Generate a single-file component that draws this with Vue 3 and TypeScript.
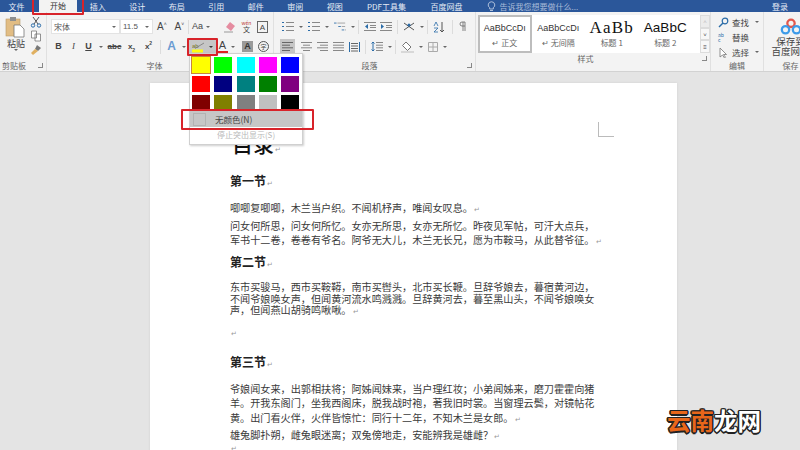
<script setup lang="ts">
const tabs = ['插入', '设计', '布局', '引用', '邮件', '审阅', '视图', 'PDF工具集', '百度网盘']

const swatches = [
  '#ffff00', '#00ff00', '#00ffff', '#ff00ff', '#0000ff',
  '#ff0000', '#000080', '#008080', '#008000', '#800080',
  '#800000', '#808000', '#808080', '#c0c0c0', '#000000',
]

const styles = [
  { name: '正文', sample: 'AaBbCcDı', cls: 'sNormal', mark: true },
  { name: '无间隔', sample: 'AaBbCcDı', cls: 'sNormal', mark: true },
  { name: '标题 1', sample: 'AaBb', cls: 'sH1', mark: false },
  { name: '标题 2', sample: 'AaBbC', cls: 'sH2', mark: false },
]

type Block = { kind: string; lines: string[] }
const doc: Block[] = [
  { kind: 'title', lines: ['目录'] },
  { kind: 'h1', lines: ['第一节'] },
  { kind: 'p1', lines: ['唧唧复唧唧，木兰当户织。不闻机杼声，唯闻女叹息。'] },
  { kind: 'p2', lines: ['问女何所思，问女何所忆。女亦无所思，女亦无所忆。昨夜见军帖，可汗大点兵，', '军书十二卷，卷卷有爷名。阿爷无大儿，木兰无长兄，愿为市鞍马，从此替爷征。'] },
  { kind: 'h2', lines: ['第二节'] },
  { kind: 'p3', lines: ['东市买骏马，西市买鞍鞯，南市买辔头，北市买长鞭。旦辞爷娘去，暮宿黄河边，', '不闻爷娘唤女声，但闻黄河流水鸣溅溅。旦辞黄河去，暮至黑山头，不闻爷娘唤女', '声，但闻燕山胡骑鸣啾啾。'] },
  { kind: 'empty', lines: [''] },
  { kind: 'h3', lines: ['第三节'] },
  { kind: 'p4', lines: ['爷娘闻女来，出郭相扶将；阿姊闻妹来，当户理红妆；小弟闻姊来，磨刀霍霍向猪', '羊。开我东阁门，坐我西阁床，脱我战时袍，著我旧时裳。当窗理云鬓，对镜帖花', '黄。出门看火伴，火伴皆惊忙：同行十二年，不知木兰是女郎。'] },
  { kind: 'p5', lines: ['雄兔脚扑朔，雌兔眼迷离；双兔傍地走，安能辨我是雄雌？'] },
  { kind: 'p6', lines: [''] },
]
</script>

<template>
  <div class="app">
    <header class="tabbar">
      <span class="tab file">文件</span>
      <span class="tab active">开始</span>
      <span v-for="t in tabs" :key="t" class="tab">{{ t }}</span>
      <span class="tell">
        <svg width="9" height="11" viewBox="0 0 9 11"><path d="M4.500 .8a3.200 3.200 0 0 0-1.800 5.900V8h3.600V6.700A3.200 3.200 0 0 0 4.500 .8zM3 9.500h3" fill="none" stroke="#cfd9ea" stroke-width=".8" /></svg>
        告诉我您想要做什么...
      </span>
      <span class="login">登录</span>
    </header>

    <section class="ribbon">
      <!-- 剪贴板 -->
      <div class="group gClip">
        <div class="gBody clipBody">
          <div class="paste">
            <svg width="22" height="22" viewBox="0 0 22 22">
              <rect x="1" y="3" width="14" height="17" fill="#e2bd84" stroke="#b99a68" stroke-width=".6" />
              <rect x="5" y="1" width="6" height="4" fill="#8f8f8f" />
              <path d="M9 9h6l4 4v8H9z" fill="#fff" stroke="#777" stroke-width=".8" />
            </svg>
            <span>粘贴</span>
            <i class="caret"></i>
          </div>
          <div class="clipTools">
            <svg width="12" height="12" viewBox="0 0 12 12"><path d="M3 1l5 7M9 1L4 8" stroke="#555" fill="none" /><circle cx="3" cy="9.500" r="1.700" fill="none" stroke="#2b6ca8" /><circle cx="9" cy="9.500" r="1.700" fill="none" stroke="#2b6ca8" /></svg>
            <svg width="12" height="12" viewBox="0 0 12 12"><path d="M1.500 1h5v7h-5zM5 4h5.500v7H5z" fill="#fff" stroke="#777" stroke-width=".8" /></svg>
            <svg width="12" height="12" viewBox="0 0 12 12"><path d="M7 1l4 3-3 3-3-2z" fill="#777" /><path d="M5 5L1 9l2 2 5-4z" fill="#e0b060" /></svg>
          </div>
        </div>
        <div class="gLabel">剪贴板<i class="launch"></i></div>
      </div>

      <!-- 字体 -->
      <div class="group gFont">
        <div class="gBody rows">
          <div class="row">
            <span class="select fontName">宋体<i class="caret"></i></span>
            <span class="select fontSize">11.5<i class="caret"></i></span>
            <span class="tool big">A<sup>˄</sup></span>
            <span class="tool big">A<sup>˅</sup></span>
            <i class="vsep tight"></i>
            <span class="tool aa">Aa<i class="caret"></i></span>
            <svg class="ico eraser" width="13" height="12" viewBox="0 0 13 12"><path d="M7 1l5 4-4 5-5-4z" fill="#e58ca0" /><path d="M1 11h9" stroke="#999" /></svg>
            <span class="tool wen"><em>wén</em>文</span>
            <span class="tool boxA">A</span>
          </div>
          <div class="row">
            <span class="tool b">B</span>
            <span class="tool it">I</span>
            <span class="tool un">U</span><i class="caret"></i>
            <span class="tool sm"><s>abc</s></span>
            <span class="tool sm">x<sub>2</sub></span>
            <span class="tool sm">x<sup>2</sup></span>
            <i class="vsep"></i>
            <span class="tool glow">A</span><i class="caret"></i>
            <span class="hiBtn">
              <svg width="14" height="12" viewBox="0 0 14 12"><text x="0" y="7" font-size="6" fill="#77772a" font-family="Liberation Sans">ab</text><path d="M3 7.500l9-5.500" stroke="#777" fill="none" stroke-width=".8" /><rect x="0" y="8.500" width="11" height="3" fill="#ffff10" /></svg>
              <i class="caret dark"></i>
            </span>
            <span class="tool colorA">A</span><i class="caret"></i>
            <span class="tool shadeA">A</span>
            <span class="tool circled">字</span>
          </div>
        </div>
        <div class="gLabel">字体<i class="launch"></i></div>
      </div>

      <!-- 段落 -->
      <div class="group gPara">
        <div class="gBody rows">
          <div class="row">
            <svg class="ico" width="12" height="11" viewBox="0 0 12 11"><path d="M4 1.500h8M4 5.500h8M4 9.500h8" stroke="#888" /><path d="M0 1.500h2M0 5.500h2M0 9.500h2" stroke="#2b6ca8" /></svg><i class="caret"></i>
            <svg class="ico" width="12" height="11" viewBox="0 0 12 11"><path d="M4 1.500h8M4 5.500h8M4 9.500h8" stroke="#888" /><path d="M0 1.500h2M0 5.500h2M0 9.500h2" stroke="#2b6ca8" /></svg><i class="caret"></i>
            <svg class="ico" width="12" height="11" viewBox="0 0 14 11"><path d="M0 1.500h3M5 5.500h3M9 9.500h3" stroke="#2b6ca8" /><path d="M4 1.500h9M9 5.500h4M13 9.500h1" stroke="#999" /></svg><i class="caret"></i>
            <i class="vsep tight"></i>
            <svg class="ico" width="12" height="9" viewBox="0 0 12 9"><path d="M0 .5h12M6 3.500h6M6 5.500h6M0 8.500h12" stroke="#888" /><path d="M4 2L1 4.500 4 7z" fill="#2b6ca8" /></svg>
            <svg class="ico" width="12" height="9" viewBox="0 0 12 9"><path d="M0 .5h12M6 3.500h6M6 5.500h6M0 8.500h12" stroke="#888" /><path d="M1 2l3 2.500L1 7z" fill="#2b6ca8" /></svg>
            <i class="vsep"></i>
            <svg class="ico" width="12" height="11" viewBox="0 0 12 11"><path d="M1 2l10 7M11 2L1 9" stroke="#555" fill="none" /><circle cx="6" cy="4" r="1.500" fill="#2b6ca8" /></svg><i class="caret"></i>
            <i class="vsep tight"></i>
            <svg class="ico" width="12" height="12" viewBox="0 0 12 12"><path d="M9 1v10M7 9l2 2 2-2" stroke="#555" fill="none" /><path d="M1 5l2-4 2 4M1 7h4l-4 4h4" stroke="#2b6ca8" stroke-width=".8" fill="none" /></svg>
            <i class="vsep wide"></i>
            <svg class="ico" width="10" height="11" viewBox="0 0 10 11"><path d="M5 1v9M7 1v9M7 1H4a2 2 0 0 0 0 4h3" stroke="#666" fill="none" stroke-width=".8" /></svg>
          </div>
          <div class="row">
            <span class="alignOn"><svg width="11" height="9" viewBox="0 0 11 9"><path d="M0 .5h11M0 3.200h8M0 5.800h11M0 8.500h8" stroke="#666" /></svg></span>
            <svg class="alignIco" width="11" height="9" viewBox="0 0 11 9"><path d="M0 .5h11M2 3.200h7M0 5.800h11M2 8.500h7" stroke="#888" /></svg>
            <svg class="alignIco" width="11" height="9" viewBox="0 0 11 9"><path d="M0 .5h11M3 3.200h8M0 5.800h11M3 8.500h8" stroke="#888" /></svg>
            <svg class="alignIco" width="11" height="9" viewBox="0 0 11 9"><path d="M0 .5h11M0 3.200h11M0 5.800h11M0 8.500h11" stroke="#888" /></svg>
            <svg class="alignIco" width="11" height="10" viewBox="0 0 11 10"><path d="M.5 0v10M10.500 0v10" stroke="#2b6ca8" /><path d="M2 1.500h7M2 4h7M2 6.500h7M2 9h7" stroke="#666" /></svg>
            <i class="vsep"></i>
            <svg class="ico" width="12" height="11" viewBox="0 0 12 11"><path d="M2 1v9M.5 2.500L2 1l1.500 1.500M.5 8.500L2 10l1.500-1.500" stroke="#2b6ca8" fill="none" /><path d="M5 1.500h7M5 4.200h7M5 6.800h7M5 9.500h7" stroke="#888" /></svg><i class="caret"></i>
            <i class="vsep tight"></i>
            <svg class="ico" width="13" height="12" viewBox="0 0 13 12"><path d="M5 1l5 5-3.500 3.500-5-5z" fill="#fff" stroke="#777" /><rect y="10" width="13" height="2" fill="#d8d8d8" /></svg><i class="caret"></i>
            <svg class="ico" width="10" height="10" viewBox="0 0 10 10"><path d="M.5.5h9v9h-9zM5 .5v9M.5 5h9" fill="none" stroke="#aaa" /></svg><i class="caret"></i>
          </div>
        </div>
        <div class="gLabel">段落<i class="launch"></i></div>
      </div>

      <!-- 样式 -->
      <div class="group gStyle">
        <div class="gBody gallery">
          <div v-for="(s, i) in styles" :key="s.name" class="styleItem" :class="{ sel: i === 0 }">
            <span :class="s.cls">{{ s.sample }}</span>
            <span class="styleName"><i v-if="s.mark">↵ </i>{{ s.name }}</span>
          </div>
          <div class="galleryBtns">
            <span class="off">˄</span>
            <span>˅</span>
            <span>≡</span>
          </div>
        </div>
        <div class="gLabel">样式<i class="launch"></i></div>
      </div>

      <!-- 编辑 -->
      <div class="group gEdit">
        <div class="gBody editList">
          <span><svg width="11" height="11" viewBox="0 0 11 11"><circle cx="7" cy="4" r="2.800" fill="none" stroke="#2b6ca8" stroke-width="1.200" /><path d="M5 6l-4 4" stroke="#2b6ca8" stroke-width="1.500" /></svg>查找<i class="caret"></i></span>
          <span><em class="abc">ab<br />c</em>替换</span>
          <span><svg width="11" height="11" viewBox="0 0 11 11"><path d="M2 1v9l2.500-2 2 3 1-.7-2-2.800h3z" fill="#fff" stroke="#777" stroke-width=".8" /></svg>选择<i class="caret"></i></span>
        </div>
        <div class="gLabel">编辑</div>
      </div>

      <!-- 保存 -->
      <div class="group gSave">
        <div class="gBody saveBody">
          <svg width="22" height="18" viewBox="0 0 24 18">
            <circle cx="12" cy="5" r="4" fill="none" stroke="#e2574c" stroke-width="2.500" />
            <circle cx="6" cy="12" r="4" fill="none" stroke="#3d9be9" stroke-width="2.500" />
            <circle cx="18" cy="12" r="4" fill="none" stroke="#3d9be9" stroke-width="2.500" />
          </svg>
          <span>保存到</span>
          <span>百度网盘</span>
        </div>
        <div class="gLabel">保存</div>
      </div>
    </section>

    <main class="canvas">
      <article class="page">
        <i class="cropMark"></i>
        <template v-for="(b, i) in doc" :key="i">
          <div :class="['block', b.kind]">
            <div v-for="(l, j) in b.lines" :key="j" class="line">{{ l }}<i v-if="j === b.lines.length - 1" class="ret">↵</i></div>
          </div>
        </template>
      </article>
    </main>

    <!-- 下拉面板 -->
    <div class="menu">
      <div class="grid">
        <i v-for="(c, i) in swatches" :key="c" class="swatch" :class="{ cur: i === 0 }" :style="{ background: c }"></i>
      </div>
      <div class="noColor"><i class="noBox"></i>无颜色(N)</div>
      <div class="stop">停止突出显示(S)</div>
    </div>

    <!-- 红框标注 -->
    <i class="mark markTab"></i>
    <i class="mark markBtn"></i>
    <i class="mark markRow"></i>

    <div class="wm"><b>云南</b><span>龙网</span></div>
  </div>
</template>

<style>
html, body { margin: 0; overflow: hidden; }
</style>

<style scoped>
.app {
  position: relative;
  width: 800px;
  height: 450px;
  overflow: hidden;
  display: flex;
  flex-direction: column;
  font-family: "Noto Sans CJK SC", "Liberation Sans", sans-serif;
  background: #e4e4e4;
}
i { font-style: normal; }

/* 标签栏 */
.tabbar {
  height: 12px;
  flex: none;
  background: #2b579a;
  color: #e6ecf5;
  font-size: 8px;
  line-height: 11px;
  display: flex;
  align-items: center;
}
.tab { width: 39.500px; text-align: center; flex: none; white-space: nowrap; }
.tab.file { width: 33px; margin-right: 1px; }
.tab.active { background: #f3f3f3; color: #333; height: 12px; margin: 0 1px 0 5px; width: 38px; }
.tab:nth-child(10) { width: 64px; }
.tab:nth-child(11) { width: 56px; }
.tell { color: #a9bcd9; display: flex; align-items: center; gap: 4px; flex: 1; padding-left: 12px; white-space: nowrap; }
.login { width: 40px; text-align: center; }

/* 功能区 */
.ribbon {
  height: 59px;
  flex: none;
  display: flex;
  background: #f3f3f3;
  border-bottom: 1px solid #d2d2d2;
  color: #444;
  font-size: 8px;
}
.group {
  display: flex;
  flex-direction: column;
  box-sizing: border-box;
  border-right: 1px solid #e0e0e0;
  flex: none;
  overflow: hidden;
}
.gBody { flex: 1; min-height: 0; }
.gLabel {
  height: 11px;
  flex: none;
  position: relative;
  text-align: center;
  font-size: 8px;
  line-height: 11px;
  color: #666;
}
.launch {
  position: absolute;
  right: 3px;
  top: 3px;
  width: 4px;
  height: 4px;
  border-right: 1px solid #888;
  border-bottom: 1px solid #888;
}
.gClip { width: 47px; }
.gClip .gLabel { padding-right: 18px; }
.gFont { width: 227px; }
.gFont .gLabel { padding-right: 11px; }
.gPara { width: 202px; }
.gPara .rows { padding-left: 6px; }
.gPara .gLabel { padding-right: 10px; }
.gStyle { width: 235px; }
.gStyle .gLabel { padding-right: 15px; }
.gEdit { width: 53px; }
.gSave { width: 53px; border-right: 0; }

.clipBody { display: flex; padding: 4px 0 0 3px; }
.paste { width: 26px; display: flex; flex-direction: column; align-items: center; font-size: 9px; line-height: 11px; color: #444; }
.clipTools { display: flex; flex-direction: column; gap: 2px; margin-left: 1px; }

.rows { display: flex; flex-direction: column; gap: 3px; padding-top: 6px; padding-left: 4px; }
.row { display: flex; align-items: center; height: 17px; white-space: nowrap; }
.caret {
  display: inline-block;
  flex: none;
  width: 0;
  height: 0;
  margin: 0 3px;
  border-left: 2px solid transparent;
  border-right: 2px solid transparent;
  border-top: 2px solid #666;
}
.caret.dark { border-top-color: #333; margin: 0 0 0 3px; }
.select {
  height: 15px;
  flex: none;
  background: #fff;
  border: 1px solid #e3e3e3;
  box-sizing: border-box;
  display: flex;
  align-items: center;
  justify-content: space-between;
  padding-left: 2px;
  color: #555;
  font-size: 8px;
}
.fontName { width: 69px; }
.fontSize { width: 33px; font-family: "Liberation Sans", sans-serif; }
.tool { width: 15px; text-align: center; flex: none; font-family: "Liberation Sans", sans-serif; color: #444; font-size: 9px; line-height: 15px; }
.tool sup, .tool sub { font-size: 5px; line-height: 0; }
.big { font-size: 10px; width: 17.500px; }
.aa { width: auto; display: flex; align-items: center; font-size: 9px; }
.vsep { width: 1px; height: 14px; background: #dcdcdc; margin: 0 3px; flex: none; }
.vsep.tight { margin-left: 0; }
.vsep.wide { margin-left: 5px; }
.ico { flex: none; margin: 0 2px; }
.eraser { margin-left: 10px; }
.alignIco { flex: none; margin: 0 2.500px; }
.wen { font-family: "Noto Sans CJK SC", sans-serif; width: 17px; font-size: 7px; line-height: 7px; display: flex; flex-direction: column; align-items: center; }
.wen em { font-style: normal; font-size: 5px; line-height: 6px; color: #b33; }
.boxA { border: 1px solid #666; width: 11px; height: 12px; line-height: 12px; box-sizing: border-box; margin-left: 2px; font-size: 8px; }
.b { font-weight: 700; }
.it { font-style: italic; font-family: "Liberation Serif", serif; }
.un { text-decoration: underline; font-weight: 700; }
.sm { font-size: 8px; width: 17px; font-weight: 700; }
.glow { color: #6b9bd2; font-size: 12px; font-weight: 700; }
.hiBtn { width: 30px; height: 15px; margin-left: -2px; flex: none; background: #c6c6c6; display: flex; align-items: center; justify-content: center; }
.colorA { font-size: 11px; border-bottom: 2px solid #e02020; line-height: 11px; width: 11px; }
.shadeA { background: #9a9a9a; color: #333; font-weight: 700; width: 11px; line-height: 11px; margin-left: 4px; }
.circled { width: 11px; height: 11px; line-height: 10px; font-size: 6px; border: 1px solid #555; border-radius: 50%; margin-left: 5px; font-family: "Noto Sans CJK SC", sans-serif; box-sizing: border-box; }
.alignOn { width: 15px; height: 15px; background: #c6c6c6; display: flex; align-items: center; justify-content: center; flex: none; margin-right: 3px; }

.gallery { display: flex; margin: 3px 0 0 2px; height: 38px; flex: none; background: #fff; }
.styleItem { width: 53.500px; flex: none; display: flex; flex-direction: column; align-items: center; box-sizing: border-box; padding-top: 6px; overflow: hidden; white-space: nowrap; }
.styleItem.sel { border: 2px solid #bdbdbd; padding-top: 4px; }
.sNormal { font-size: 9px; line-height: 14px; color: #333; font-family: "Liberation Sans", sans-serif; }
.sH1 { font-size: 17px; line-height: 14px; color: #111; font-family: "Liberation Serif", serif; letter-spacing: 1.200px; }
.sH2 { font-size: 13.500px; line-height: 14px; color: #111; font-family: "Liberation Sans", sans-serif; }
.styleName { font-size: 8px; line-height: 12px; color: #666; margin-top: 2px; }
.galleryBtns { margin-left: auto; width: 10px; display: flex; flex-direction: column; }
.galleryBtns span { height: 12.600px; font-size: 6px; line-height: 12px; text-align: center; border: 1px solid #dcdcdc; box-sizing: border-box; background: #f7f7f7; font-family: "Liberation Sans", sans-serif; }
.galleryBtns .off { color: #bbb; background: #ececec; }

.editList { display: flex; flex-direction: column; padding: 3px 0 0 7px; gap: 1px; font-size: 8.500px; line-height: 14px; }
.editList span { display: flex; align-items: center; gap: 3px; white-space: nowrap; height: 14px; }
.abc { font-style: normal; font-size: 5px; line-height: 5px; color: #2b6ca8; width: 11px; }

.saveBody { display: flex; flex-direction: column; align-items: center; font-size: 9.500px; line-height: 10px; white-space: nowrap; padding-top: 6px; }

/* 文档 */
.canvas { flex: 1; min-height: 0; padding: 11px 0 0 150px; overflow: hidden; }
.page {
  position: relative;
  width: 527px;
  height: 400px;
  background: #fff;
  box-sizing: border-box;
  padding: 45px 0 0 80px;
  box-shadow: 0 0 2px #cfcfcf;
  color: #3a3a3a;
  font-size: 10.150px;
  white-space: nowrap;
}
.cropMark {
  position: absolute;
  left: 448px;
  top: 39px;
  width: 15px;
  height: 14px;
  border-left: 1px solid #bbb;
  border-bottom: 1px solid #bbb;
}
.block { line-height: 14px; }
.ret { color: #999; font-size: 7px; margin-left: 1px; }
.title { font-size: 21px; line-height: 30px; margin-left: 2px; font-weight: 500; color: #111; }
.title .ret, .h1 .ret, .h2 .ret, .h3 .ret { font-weight: 400; }
.h1, .h2, .h3 { font-size: 12px; font-weight: 700; line-height: 16px; color: #222; }
.h1 { margin-top: 9px; }
.p1 { margin-top: 10px; }
.p2 { margin-top: 3px; }
.h2 { margin-top: 6px; }
.p3 { margin-top: 9px; line-height: 11.500px; }
.empty { margin-top: 7px; }
.h3 { margin-top: 14px; }
.p4 { margin-top: 10px; line-height: 14.500px; }
.p5 { margin-top: 2px; }
.p6 { margin-top: -3px; }

/* 下拉 */
.menu {
  position: absolute;
  left: 189px;
  top: 53px;
  width: 114px;
  height: 92px;
  box-sizing: border-box;
  padding-top: 3px;
  background: #fff;
  border: 1px solid #d0d0d0;
  box-shadow: 1px 1px 2px rgba(0, 0, 0, .2);
  font-size: 8px;
}
.grid {
  display: grid;
  grid-template-columns: repeat(5, 18px);
  grid-auto-rows: 16px;
  column-gap: 4.300px;
  row-gap: 3px;
  padding-left: 2px;
  height: 54px;
}
.swatch { display: block; }
.swatch.cur { outline: 1px solid #c8843c; }
.noColor {
  height: 16px;
  background: #c6c6c6;
  display: flex;
  align-items: center;
  color: #444;
  font-size: 8.500px;
  line-height: 16px;
}
.noBox { width: 11px; height: 11px; margin: 0 9px 0 3px; background: #c6c6c6; border: 1px solid #b2b2b2; }
.stop { text-align: center; color: #b8b8b8; line-height: 16px; }

.mark {
  position: absolute;
  border: 2px solid #d8232a;
  box-sizing: border-box;
  border-radius: 1px;
}
.markTab { left: 32px; top: -2px; width: 52px; height: 17px; }
.markBtn { left: 187px; top: 38px; width: 31px; height: 18px; }
.markRow { left: 181px; top: 109px; width: 133px; height: 21px; }

.wm {
  position: absolute;
  left: 667px;
  top: 405px;
  font-size: 23.500px;
  line-height: 30px;
  font-weight: 700;
  white-space: nowrap;
  letter-spacing: 0;
  text-shadow: -1px -1px 0 #222, 1px -1px 0 #222, -1px 1px 0 #222, 1px 1px 0 #222, 0 -1.500px 0 #222, 0 1.500px 0 #222, -1.500px 0 0 #222, 1.500px 0 0 #222;
}
.wm b { color: #e8661a; font-weight: 700; }
.wm span { color: #fff; }
</style>
